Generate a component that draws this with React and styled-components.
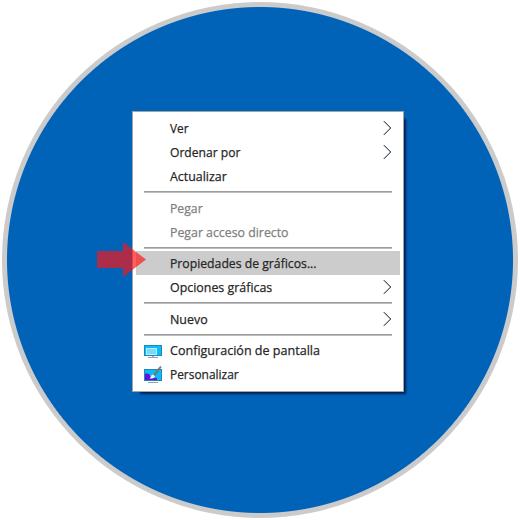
import styled, { createGlobalStyle } from 'styled-components';

const GlobalStyle = createGlobalStyle`
  * {
    box-sizing: border-box;
  }
  body {
    margin: 0;
    background: #fff;
    overflow: hidden;
  }
`;

const Page = styled.div`
  width: 520px;
  height: 520px;
  padding: 2px;
`;

const Desktop = styled.main`
  width: 516px;
  height: 516px;
  padding: 109px 0 0 130px;
  border-radius: 50%;
  background: radial-gradient(circle closest-side, #0063b8 252.5px, #cbcbcb 253.5px);
`;

const Menu = styled.nav`
  position: relative;
  width: 272px;
  height: 281px;
  background: #fff;
  border: 1px solid #a3a3a3;
  box-shadow: 5px 5px 2px -3px rgba(0, 20, 65, 0.85);
`;

const MenuList = styled.ul`
  margin: 0;
  padding: 4px 3px 0;
  list-style: none;
`;

const StyledItem = styled.li`
  display: flex;
  align-items: center;
  height: 24px;
  padding-right: 8px;
  background: ${(props) => (props.$highlighted ? '#cccccc' : 'transparent')};
  color: ${(props) => (props.$disabled ? '#808080' : '#262626')};
`;

const IconSlot = styled.span`
  display: flex;
  width: 34px;
  padding-left: 8px;
  flex-shrink: 0;
`;

const Label = styled.span`
  flex: 1;
  padding-top: 1px;
  font-family: 'Open Sans', 'Noto Sans', sans-serif;
  font-size: 13.3px;
  line-height: 23px;
  white-space: nowrap;
  -webkit-text-stroke: 0.25px currentColor;
  transform: scaleX(${(props) => props.$stretch});
  transform-origin: left center;
`;

const Separator = styled.li`
  height: ${(props) => (props.$tight ? '7px' : '8px')};
  padding: 3px 8px 0;
  &::before {
    content: '';
    display: block;
    height: 1px;
    background: #9c9c9c;
    box-shadow: 0 1px #bcbcbc;
  }
`;

const Pointer = styled.svg`
  position: absolute;
  left: -36px;
  top: 130px;
`;

const Chevron = () => (
  <svg width="10" height="16" viewBox="0 0 10 16" fill="none">
    <path d="M1.4 1.2 8.2 8 1.4 14.8" stroke="#c98670" />
    <path d="M2.2 1.2 9 8 2.2 14.8" stroke="#2c6d96" />
  </svg>
);

const DisplayIcon = () => (
  <svg width="18" height="16" viewBox="0 0 18 16">
    <path d="M0 3h18v11H0z" fill="#2387b5" />
    <path d="M1 4h16v9H1z" fill="#08bdf8" />
    <path d="M2 6h11v7H2z" fill="#b5edff" />
    <path d="M3 7h9v5H3z" fill="#79d9fc" />
    <path d="M4 15.5h10" stroke="#8fa5b0" />
    <path d="M8 14h2v1H8z" fill="#9fb5bf" />
  </svg>
);

const PersonalizeIcon = () => (
  <svg width="18" height="18" viewBox="0 0 18 18">
    <path d="M0 4h18v12H0z" fill="#2387b5" />
    <path d="M1 5h16v10H1z" fill="#08bdf8" />
    <path d="M1 9c3-1 5 0 5 2l2 2h5v2H1z" fill="#6410dc" />
    <path d="M4 17.5h10" stroke="#8fa5b0" />
    <path d="M9 10 16.3 1.2l1 .8L11 11z" fill="#777" stroke="#70767a" strokeWidth=".6" />
    <path d="M5.5 13.2c1.6-.4 1.2-3 3.5-3.7l2 1.7c-.8 2.3-3.5 2.9-5.5 2z" fill="#eef3f6" />
  </svg>
);

const MenuItem = ({ label, stretch, icon, submenu, disabled, highlighted }) => (
  <StyledItem $disabled={disabled} $highlighted={highlighted}>
    <IconSlot>{icon}</IconSlot>
    <Label $stretch={stretch}>{label}</Label>
    {submenu && <Chevron />}
  </StyledItem>
);

const App = () => (
  <Page>
    <GlobalStyle />
    <Desktop>
      <Menu>
        <MenuList>
          <MenuItem label="Ver" stretch={0.89} submenu />
          <MenuItem label="Ordenar por" stretch={0.91} submenu />
          <MenuItem label="Actualizar" stretch={0.933} />
          <Separator />
          <MenuItem label="Pegar" stretch={0.92} disabled />
          <MenuItem label="Pegar acceso directo" stretch={0.927} disabled />
          <Separator $tight />
          <MenuItem label="Propiedades de gráficos..." stretch={0.919} highlighted />
          <MenuItem label="Opciones gráficas" stretch={0.933} submenu />
          <Separator />
          <MenuItem label="Nuevo" stretch={0.935} submenu />
          <Separator $tight />
          <MenuItem label="Configuración de pantalla" stretch={0.944} icon={<DisplayIcon />} />
          <MenuItem label="Personalizar" stretch={0.897} icon={<PersonalizeIcon />} />
        </MenuList>
        <Pointer width="50" height="36" viewBox="0 0 50 36">
          <path d="M0 9h26V0l23 17.5L26 35v-9H0z" fill="#ff1414" fillOpacity=".67" />
        </Pointer>
      </Menu>
    </Desktop>
  </Page>
);

export default App;
